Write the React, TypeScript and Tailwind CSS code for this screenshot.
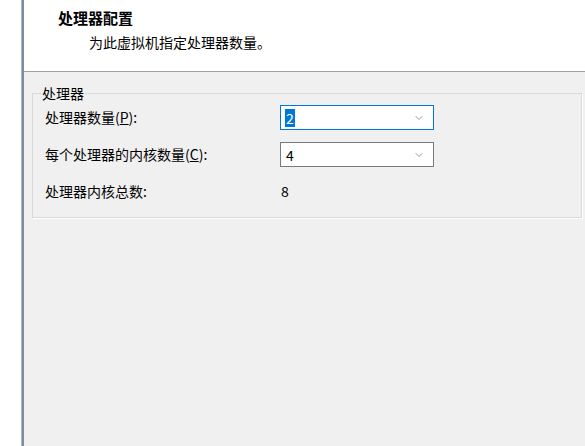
import { ChevronDown } from "lucide-react";

const font = {
    fontFamily: '"Noto Sans CJK SC", "Noto Sans", sans-serif',
};

function Combo(props: { value: string; focused?: boolean }) {
    return (
        <div
            className={
                props.focused
                    ? "flex items-center justify-between w-[154px] h-[25px] bg-white border border-[#0078d7] pl-[4px] pr-[8px]"
                    : "flex items-center justify-between w-[154px] h-[25px] bg-white border border-[#7a7a7a] pl-[4px] pr-[8px]"
            }
        >
            {props.focused ? (
                <span className="bg-[#0078d7] text-white text-[14px] leading-[18px] px-[1px]">
                    {props.value}
                </span>
            ) : (
                <span className="text-black text-[14px] leading-[18px] px-[1px]">{props.value}</span>
            )}
            <ChevronDown size={12} strokeWidth={1.2} className="text-[#555]" />
        </div>
    );
}

export default function App() {
    return (
        <div className="flex w-[585px] h-[446px] bg-white text-black" style={font}>
            <div className="w-[21px] bg-white" />
            <div className="w-[3px] bg-[#7d8d9d] border-l border-[#a9b5c1]" />
            <div className="flex flex-col flex-1">
                <div className="h-[72px] bg-white border-b border-[#a0a0a0] pl-[34px] pt-[8px]">
                    <div className="text-[15px] font-bold leading-[20px]">处理器配置</div>
                    <div className="text-[14px] leading-[20px] pl-[31px] pt-[4px]">
                        为此虚拟机指定处理器数量。
                    </div>
                </div>
                <div className="flex-1 bg-[#f0f0f0] pl-[8px] pr-[3px] pt-[13px]">
                    <fieldset className="border border-[#d9d9d9] shadow-[1px_1px_0_#ffffff] pb-[13px]">
                        <legend className="text-[14px] leading-[16px] px-[1px] ml-[8px]">处理器</legend>
                        <div className="grid grid-cols-[235px_1fr] grid-rows-[25px_25px_25px] gap-y-[12px] pt-[4px] pl-[12px] items-center text-[14px]">
                            <div>
                                处理器数量(<span className="underline">P</span>):
                            </div>
                            <Combo value="2" focused />
                            <div>
                                每个处理器的内核数量(<span className="underline">C</span>):
                            </div>
                            <Combo value="4" />
                            <div>处理器内核总数:</div>
                            <div className="pl-[1px]">8</div>
                        </div>
                    </fieldset>
                </div>
            </div>
        </div>
    );
}
